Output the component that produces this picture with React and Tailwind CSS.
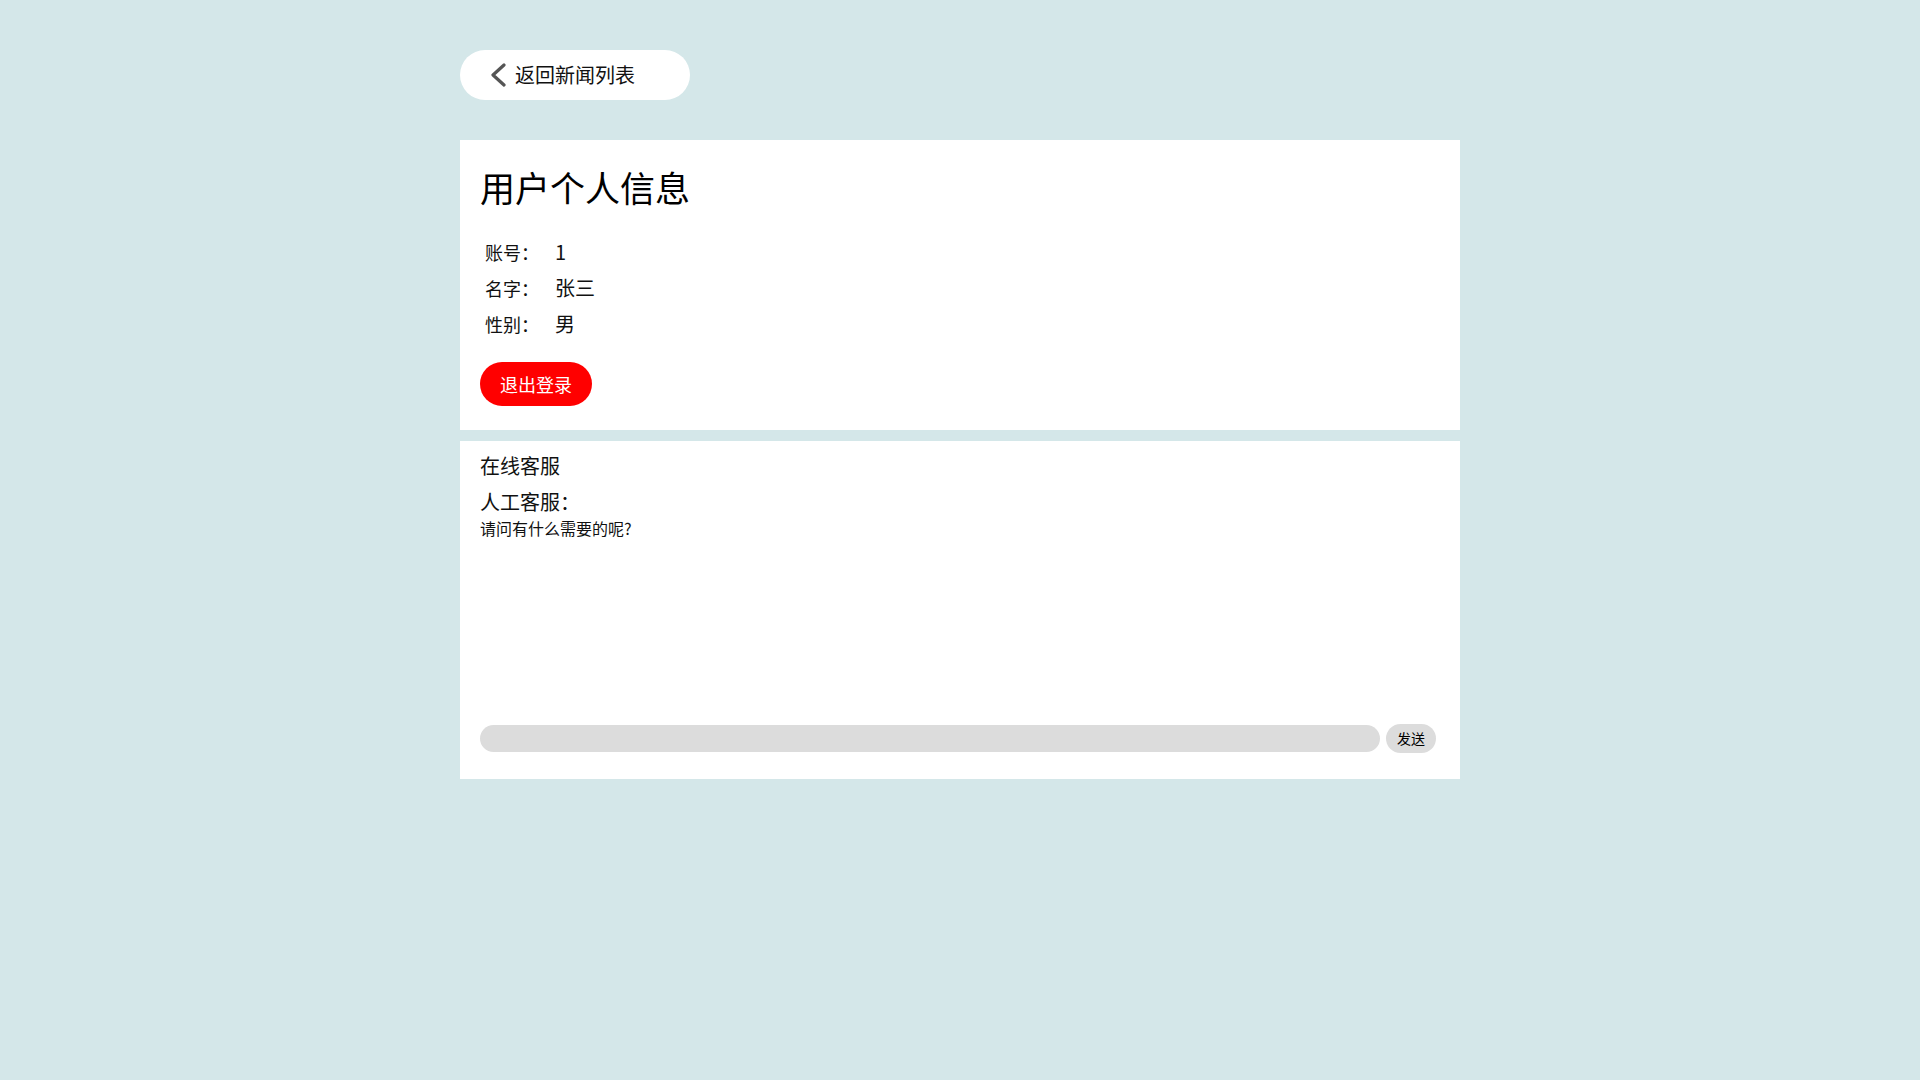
import React, { useState } from 'react';

const FONT = { fontFamily: '"Noto Sans CJK SC", "Noto Sans", sans-serif' };

function BackButton() {
  return (
    <button className="flex items-center w-[230px] h-[50px] rounded-full bg-white pl-[30px] text-[20px] text-[#111]">
      <svg width="16" height="24" viewBox="0 0 16 24" className="mr-[9px]">
        <polyline points="14,2 3,12 14,22" fill="none" stroke="#555" strokeWidth="3.2" strokeLinecap="round" strokeLinejoin="round" />
      </svg>
      <span>返回新闻列表</span>
    </button>
  );
}

function UserInfo() {
  const rows = [
    ['账号：', '1'],
    ['名字：', '张三'],
    ['性别：', '男'],
  ];
  return (
    <div className="bg-white h-[290px] pl-5 pt-[22px]">
      <h1 className="text-[35px] leading-[50px] text-black">用户个人信息</h1>
      <div className="mt-[22px] pl-[5px]">
        {rows.map(([k, v]) => (
          <div key={k} className="flex items-center h-[36px] text-[#111]">
            <span className="w-[70px] text-[18px]">{k}</span>
            <span className="text-[20px]">{v}</span>
          </div>
        ))}
      </div>
      <button className="mt-[20px] h-[44px] px-5 rounded-full bg-[#ff0000] text-white text-[18px]">
        退出登录
      </button>
    </div>
  );
}

function ChatBox() {
  const [msg, setMsg] = useState('');
  return (
    <div className="bg-white h-[338px] mt-[11px] flex flex-col pl-5 pr-6 pt-[10px] pb-[26px]">
      <div className="text-[20px] leading-[30px] text-[#111]">在线客服</div>
      <div className="text-[20px] leading-[30px] mt-[6px] text-[#111]">人工客服：</div>
      <div className="text-[16px] leading-[22px] text-[#111]">请问有什么需要的呢?</div>
      <div className="mt-auto flex items-center gap-[6px]">
        <input
          value={msg}
          onChange={(e) => setMsg(e.target.value)}
          className="flex-1 h-[27px] rounded-full bg-[#dcdcdc] px-3 text-[14px] outline-none"
        />
        <button className="w-[50px] h-[29px] rounded-full bg-[#dcdcdc] text-[14px] text-black">发送</button>
      </div>
    </div>
  );
}

export default function App() {
  return (
    <div className="min-h-screen bg-[#d4e7e9]" style={FONT}>
      <div className="w-[1000px] mx-auto pt-[50px]">
        <BackButton />
        <div className="mt-[40px]">
          <UserInfo />
          <ChatBox />
        </div>
      </div>
    </div>
  );
}
